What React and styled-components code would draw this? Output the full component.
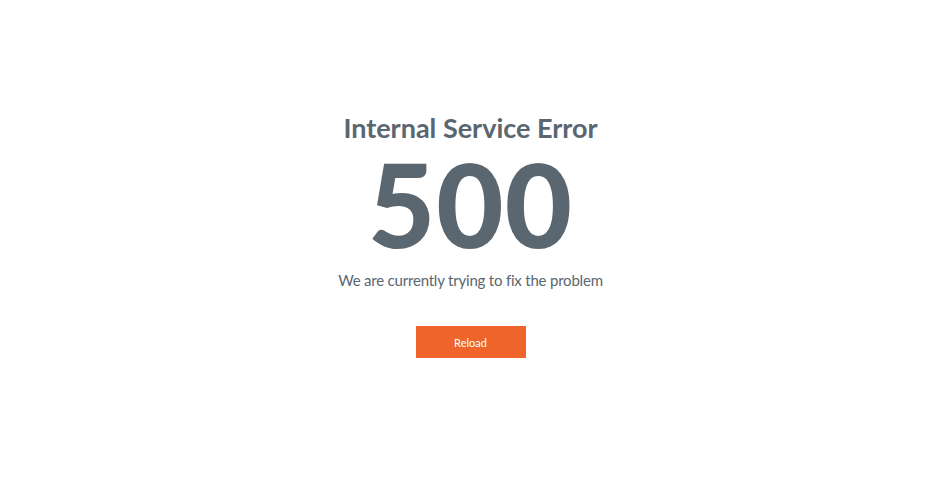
import styled, { createGlobalStyle } from "styled-components";

const GlobalStyle = createGlobalStyle`
  html, body {
    margin: 0;
    padding: 0;
    background: #ffffff;
    font-family: "Lato", "Noto Sans", sans-serif;
  }
`;

const Page = styled.div`
  display: flex;
  flex-direction: column;
  align-items: center;
  padding-top: 112px;
  height: 499px;
  box-sizing: border-box;
  color: #5a6670;
`;

const Title = styled.h1`
  margin: 0;
  font-size: 27px;
  line-height: 32px;
  font-weight: 700;
`;

const Code = styled.div`
  margin-top: 2px;
  font-size: 116px;
  line-height: 116px;
  font-weight: 900;
  letter-spacing: 1px;
`;

const Message = styled.p`
  margin: 7px 0 0;
  font-size: 15px;
  line-height: 22px;
  letter-spacing: -0.2px;
`;

const Button = styled.button`
  margin-top: 35px;
  width: 110px;
  height: 32px;
  border: none;
  background: #ee642a;
  color: #ffffff;
  font-family: "Lato", "Noto Sans", sans-serif;
  font-size: 11px;
  cursor: pointer;
`;

const App = () => {
  return (
    <>
      <GlobalStyle />
      <Page>
        <Title>Internal Service Error</Title>
        <Code>500</Code>
        <Message>We are currently trying to fix the problem</Message>
        <Button>Reload</Button>
      </Page>
    </>
  );
};

export default App;
